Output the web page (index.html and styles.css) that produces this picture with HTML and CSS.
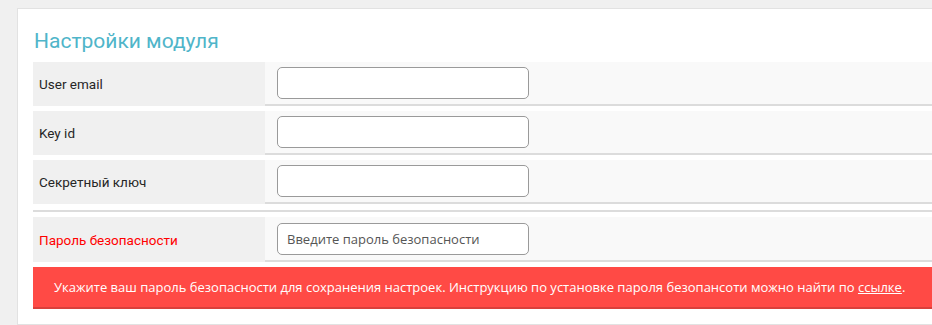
FILE: index.html
```html
<!DOCTYPE html>
<html lang="ru">
<head>
    <meta charset="UTF-8">
    <meta name="viewport" content="width=device-width, initial-scale=1.0">
    <title>Настройки модуля</title>
    <link rel="stylesheet" href="styles.css">
</head>
<body>
    <div class="settings-panel">
        <h2>Настройки модуля</h2>

        <div class="form-row">
            <label class="form-label" for="userEmail">User email</label>
            <div class="form-value"><input type="text" id="userEmail"></div>
        </div>
        <div class="form-row">
            <label class="form-label" for="keyId">Key id</label>
            <div class="form-value"><input type="text" id="keyId"></div>
        </div>
        <div class="form-row">
            <label class="form-label" for="secretKey">Секретный ключ</label>
            <div class="form-value"><input type="text" id="secretKey"></div>
        </div>

        <div class="separator"></div>

        <div class="form-row tall">
            <label class="form-label required" for="securityPass">Пароль безопасности</label>
            <div class="form-value"><input type="password" id="securityPass" placeholder="Введите пароль безопасности"></div>
        </div>

        <div class="alert-error">
            Укажите ваш пароль безопасности для сохранения настроек. Инструкцию по установке пароля безопансоти можно найти по <a href="#">ссылке</a>.
        </div>
    </div>
</body>
</html>
```

FILE: styles.css
```css
body {
    font-family: Roboto, "Liberation Sans", sans-serif;
    background-color: #f0f0f0;
    margin: 0;
    padding: 8px 0 0 17px;
    overflow: hidden;
}
.settings-panel {
    background-color: white;
    border: 1px solid #e2e2e2;
    border-right: none;
    padding: 17px 0 15px 15px;
}
.settings-panel h2 {
    color: #4fb5c9;
    font-size: 21px;
    font-weight: 400;
    line-height: 30px;
    margin: 0 0 6px 1px;
}
.form-row {
    display: flex;
    margin-bottom: 5px;
}
.form-label {
    width: 226px;
    height: 44px;
    padding-left: 6px;
    background-color: #f0f0f0;
    color: #262626;
    font-size: 13.5px;
    display: flex;
    align-items: center;
}
.form-label.required {
    color: #f00;
}
.form-value {
    flex: 1;
    height: 42px;
    background-color: #f9f9f9;
    border-bottom: 2px solid #dcdcdc;
    padding-left: 12px;
    display: flex;
    align-items: center;
}
.form-row.tall .form-label {
    height: 45px;
}
.form-row.tall .form-value {
    height: 43px;
}
.form-value input {
    width: 252px;
    height: 32px;
    box-sizing: border-box;
    border: 1px solid #9a9a9a;
    border-radius: 5px;
    background: white;
    padding: 0 9px;
    font-family: "Open Sans", sans-serif;
    font-size: 13px;
    color: #555;
}
.form-value input::placeholder {
    color: #555;
}
.separator {
    height: 2px;
    background-color: #dcdcdc;
    margin: 6px 0 5px;
}
.alert-error {
    background-color: #ff4a45;
    border-bottom: 2px solid #d9403b;
    color: #fff;
    font-family: "Open Sans", sans-serif;
    font-size: 13px;
    height: 40px;
    line-height: 40px;
    padding-left: 21px;
    white-space: nowrap;
}
.alert-error a {
    color: #fff;
}
```
